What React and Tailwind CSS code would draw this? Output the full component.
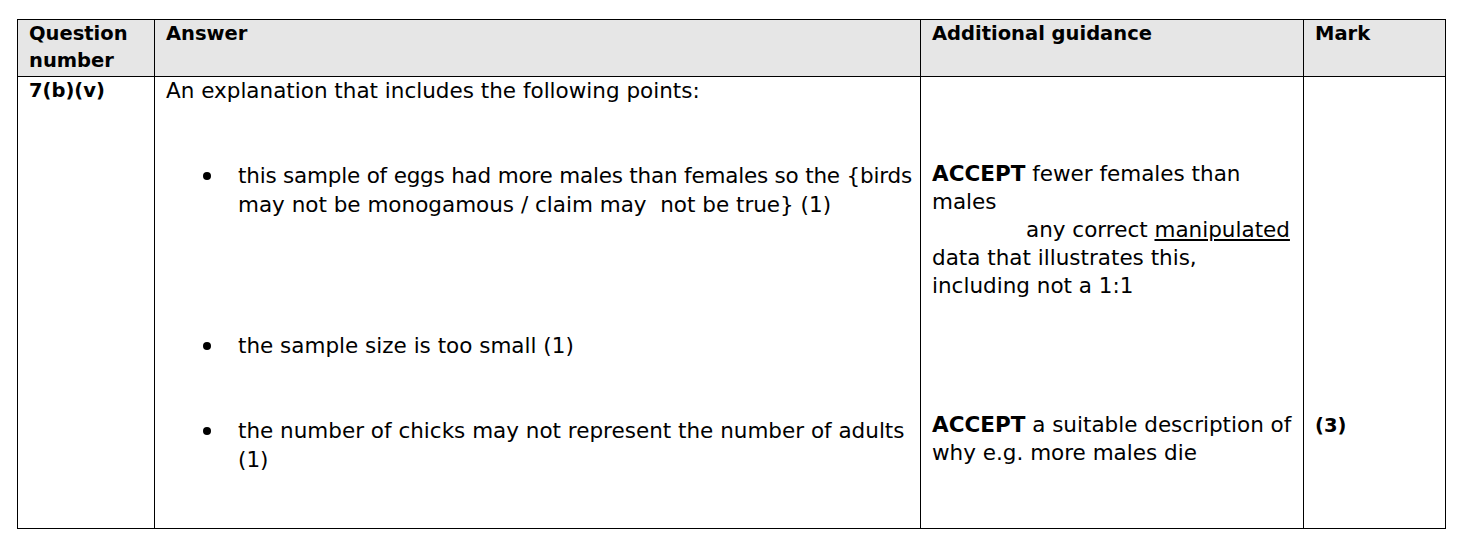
export default function App() {
  const font = { fontFamily: '"DejaVu Sans", Verdana, sans-serif' };
  return (
    <div className="w-[1480px] h-[546px] bg-white pt-[19px] pl-[17px] text-black text-[21.5px]" style={font}>
      <div className="grid grid-cols-[137px_766px_383px_142px] w-[1429px] border-l border-t border-black whitespace-nowrap">
        {/* Header */}
        <div className="h-[57px] bg-[#e6e6e6] border-r border-b border-black pl-[11px] font-bold text-[19.5px] leading-[27px]">
          Question<br />number
        </div>
        <div className="h-[57px] bg-[#e6e6e6] border-r border-b border-black pl-[11px] font-bold text-[19.5px] leading-[27px]">Answer</div>
        <div className="h-[57px] bg-[#e6e6e6] border-r border-b border-black pl-[11px] font-bold text-[19.5px] leading-[27px]">Additional guidance</div>
        <div className="h-[57px] bg-[#e6e6e6] border-r border-b border-black pl-[11px] font-bold text-[19.5px] leading-[27px]">Mark</div>

        {/* Body */}
        <div className="h-[452px] border-r border-b border-black pl-[11px] font-bold text-[19.5px] leading-[28px]">7(b)(v)</div>
        <div className="h-[452px] border-r border-b border-black pl-[11px] leading-[29px]">
          <p className="-mt-[1px]">An explanation that includes the following points:</p>
          <ul className="pl-[37px]">
            <li className="flex mt-[56px]">
              <span className="w-[35px] shrink-0 flex items-start pt-[11px]"><span className="w-[8px] h-[8px] rounded-full bg-black" /></span>
              <span><span className="tracking-[-0.2px]">this sample of eggs had more males than females so the {'{'}birds</span><br /><span className="whitespace-pre">may not be monogamous / claim may  not be true{'}'} (1)</span></span>
            </li>
            <li className="flex mt-[112px]">
              <span className="w-[35px] shrink-0 flex items-start pt-[11px]"><span className="w-[8px] h-[8px] rounded-full bg-black" /></span>
              <span>the sample size is too small (1)</span>
            </li>
            <li className="flex mt-[56px]">
              <span className="w-[35px] shrink-0 flex items-start pt-[11px]"><span className="w-[8px] h-[8px] rounded-full bg-black" /></span>
              <span>the number of chicks may not represent the number of adults<br />(1)</span>
            </li>
          </ul>
        </div>
        <div className="h-[452px] border-r border-b border-black pl-[11px] leading-[28px] pt-[83px]">
          <p><b>ACCEPT</b> fewer females than<br />males<br /><span className="pl-[94px]">any correct <u className="underline-offset-2">manipulated</u></span><br />data that illustrates this,<br />including not a 1:1</p>
          <p className="mt-[111px]"><b>ACCEPT</b> a suitable description of<br />why e.g. more males die</p>
        </div>
        <div className="h-[452px] border-r border-b border-black pl-[11px] leading-[28px] pt-[335px] font-bold text-[19.5px]">(3)</div>
      </div>
    </div>
  );
}
